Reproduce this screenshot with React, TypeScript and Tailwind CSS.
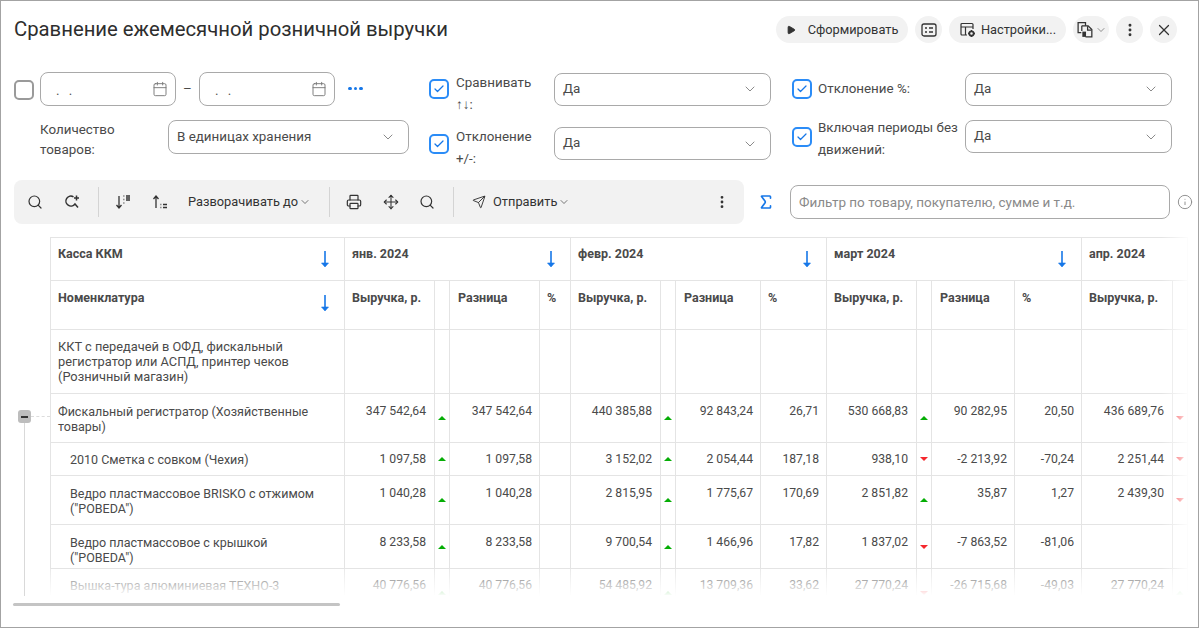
import { Calendar, Check, ChevronDown, Info, Move, MoreVertical, Play, Printer, Search, Send, Sigma, X } from "lucide-react";

const SortDownIcon = () => (
  <svg width="18" height="18" viewBox="0 0 18 18" fill="none" stroke="#333" strokeWidth="1.3">
    <path d="M5 3v12M2.500 12 5 15l2.500-3" />
    <path d="M9.500 3h.8M9.500 6.500h.8M9.500 10h.8M12 3h4M12 5h4M12 7h4" />
  </svg>
);

const SortUpIcon = () => (
  <svg width="18" height="18" viewBox="0 0 18 18" fill="none" stroke="#333" strokeWidth="1.3">
    <path d="M5 15V3M2.500 6 5 3l2.500 3" />
    <path d="M9.500 11.500h.8M9.500 14.500h.8M12 11.500h4M12 14.500h4" />
  </svg>
);

const SearchNextIcon = () => (
  <svg width="18" height="18" viewBox="0 0 18 18" fill="none" stroke="#333" strokeWidth="1.5">
    <path d="M10.500 3.800A5 5 0 1 0 12 11l3 3.600" />
    <path d="M13.500 2.500v5M11 5h5" />
  </svg>
);

const ReportListIcon = () => (
  <svg width="18" height="18" viewBox="0 0 18 18" fill="none" stroke="#333" strokeWidth="1.3">
    <rect x="2" y="3" width="14" height="12" rx="2" />
    <path d="M5 7h2M5 11h2M9 7h4M9 11h4" strokeWidth="1.6" />
  </svg>
);

const SettingsTableIcon = () => (
  <svg width="18" height="18" viewBox="0 0 18 18" fill="none" stroke="#333" strokeWidth="1.2">
    <path d="M8 14H3a1 1 0 0 1-1-1V3.500a1 1 0 0 1 1-1h10a1 1 0 0 1 1 1V8" />
    <path d="M2 6h12M6.500 6v8" />
    <circle cx="12.500" cy="12.500" r="2.200" strokeWidth="1.800" />
    <path d="M12.500 9v1M12.500 15v1M9 12.500h1M15 12.500h1" strokeWidth="1.400" />
  </svg>
);

const VariantsIcon = () => (
  <svg width="19" height="19" viewBox="0 0 18 18" fill="none" stroke="#333" strokeWidth="1.2">
    <path d="M5 12H2V2.500h7V5.500" />
    <path d="M5.500 5.500h6l3.500 3.500v7H9" />
    <path d="M5.500 5.500v5M11 6v3.500h3.500" />
    <rect x="6" y="11" width="3.500" height="5" fill="#333" stroke="none" />
  </svg>
);

const Pill = ({ className, children }: { className: string; children: React.ReactNode }) => (
  <div className={`h-[27px] rounded-full bg-[#f2f2f2] flex items-center justify-center shrink-0 text-[12.800px] text-[#333] ${className}`}>
    {children}
  </div>
);

const BlueCheck = () => (
  <div className="w-5 h-5 shrink-0 rounded-[5px] border-2 border-[#2b8cf7] flex items-center justify-center bg-white">
    <Check className="w-3 h-3 text-[#1677e8]" strokeWidth={2.5} />
  </div>
);

const SelectBox = ({ value, className }: { value: string; className: string }) => (
  <div className={`rounded-lg border border-[#a9a9a9] bg-white flex items-center justify-between pl-2 pr-3 text-[#4a4a4a] ${className}`}>
    <span>{value}</span>
    <ChevronDown className="w-4 h-4 text-[#777]" strokeWidth={1.3} />
  </div>
);

const DateBox = () => (
  <div className="w-[136px] h-[34px] rounded-lg border border-[#a9a9a9] flex items-center justify-between pl-[15px] pr-[7px] text-[#555]">
    <span className="tracking-[3px] pt-1">. .</span>
    <Calendar className="w-4 h-4 text-[#777]" strokeWidth={1.4} />
  </div>
);

const Divider = () => <div className="w-px h-[30px] bg-[#d4d4d4] shrink-0" />;

const ArrowDownBlue = () => (
  <svg width="12" height="20" viewBox="0 0 12 20" fill="none" className="ml-auto shrink-0" stroke="#1677e8" strokeWidth="1.6">
    <path d="M6 2v15" />
    <path d="M2.500 14 6 18l3.500-4z" fill="#1677e8" strokeWidth="0.6" />
  </svg>
);

type Dir = "up" | "down" | "";

const Tri = ({ dir }: { dir: Dir }) => {
  if (dir === "up") return <div className="mx-auto w-0 h-0 border-x-[4px] border-b-[4px] border-x-transparent border-b-[#05ad05]" />;
  if (dir === "down") return <div className="mx-auto w-0 h-0 border-x-[4px] border-t-[4px] border-x-transparent border-t-[#f5282d]" />;
  return null;
};

const months = [
  { name: "янв. 2024", span: 4, arrow: true },
  { name: "февр. 2024", span: 4, arrow: true },
  { name: "март 2024", span: 4, arrow: true },
  { name: "апр. 2024", span: 2, arrow: false },
];

const colWidths = [294, 90, 15, 90, 31, 90, 15, 85, 66, 90, 15, 83, 67, 91, 15];

const subHeaders = ["Выручка, р.", "", "Разница", "%", "Выручка, р.", "", "Разница", "%", "Выручка, р.", "", "Разница", "%", "Выручка, р.", ""];

const rows: { name: string; indent?: boolean; h: string; pad: string; cells: string[][]; dirs: Dir[] }[] = [
  {
    name: "Фискальный регистратор (Хозяйственные товары)",
    h: "h-[49px]",
    pad: "pt-[10px]",
    cells: [["347 542,64", "347 542,64", ""], ["440 385,88", "92 843,24", "26,71"], ["530 668,83", "90 282,95", "20,50"], ["436 689,76"]],
    dirs: ["up", "up", "up", "down"],
  },
  {
    name: "2010 Сметка с совком (Чехия)",
    indent: true,
    h: "h-[33px]",
    pad: "pt-[9px]",
    cells: [["1 097,58", "1 097,58", ""], ["3 152,02", "2 054,44", "187,18"], ["938,10", "-2 213,92", "-70,24"], ["2 251,44"]],
    dirs: ["up", "up", "down", "down"],
  },
  {
    name: 'Ведро пластмассовое BRISKO с отжимом ("POBEDA")',
    indent: true,
    h: "h-[49px]",
    pad: "pt-[10px]",
    cells: [["1 040,28", "1 040,28", ""], ["2 815,95", "1 775,67", "170,69"], ["2 851,82", "35,87", "1,27"], ["2 439,30"]],
    dirs: ["up", "up", "up", "down"],
  },
  {
    name: 'Ведро пластмассовое с крышкой ("POBEDA")',
    indent: true,
    h: "h-[44px]",
    pad: "pt-[10px]",
    cells: [["8 233,58", "8 233,58", ""], ["9 700,54", "1 466,96", "17,82"], ["1 837,02", "-7 863,52", "-81,06"], [""]],
    dirs: ["up", "up", "down", ""],
  },
  {
    name: "Вышка-тура алюминиевая ТЕХНО-3",
    indent: true,
    h: "h-[49px]",
    pad: "pt-[9px]",
    cells: [["40 776,56", "40 776,56", ""], ["54 485,92", "13 709,36", "33,62"], ["27 770,24", "-26 715,68", "-49,03"], ["27 770,24"]],
    dirs: ["up", "up", "down", "up"],
  },
];

const cellB = "border border-[#e4e4e4]";

const GroupCells = ({ group, dir, pad }: { group: string[]; dir: Dir; pad: string }) => (
  <>
    <td className={`${cellB} ${pad} align-top text-right text-[12.200px] pr-[8px]`}>{group[0]}</td>
    <td className={`${cellB} align-middle`}>
      <Tri dir={dir} />
    </td>
    {group.slice(1).map((v, i) => (
      <td key={i} className={`${cellB} ${pad} align-top text-right text-[12.200px] pr-[7px]`}>
        {v}
      </td>
    ))}
  </>
);

const App = () => {
  return (
    <div className="w-[1199px] h-[628px] border border-[#a3a3a3] bg-white overflow-hidden text-[13.400px] text-[#4a4a4a] font-['Roboto',sans-serif]">
      {/* Title */}
      <div className="flex items-center pl-[13px] pr-[21px] pt-[15px]">
        <h1 className="text-[20.300px] leading-[27px] text-[#2e2e2e] font-normal">Сравнение ежемесячной розничной выручки</h1>
        <div className="ml-auto flex items-center gap-[7px]">
          <Pill className="w-[132px] gap-[12px]">
            <Play className="w-[10px] h-[10px] fill-[#333] text-[#333]" />
            <span>Сформировать</span>
          </Pill>
          <Pill className="w-[27px]">
            <ReportListIcon />
          </Pill>
          <Pill className="w-[117px] gap-[4px]">
            <SettingsTableIcon />
            <span>Настройки...</span>
          </Pill>
          <Pill className="w-[36px]">
            <VariantsIcon />
            <ChevronDown className="w-3 h-3 text-[#555]" strokeWidth={1.3} />
          </Pill>
          <Pill className="w-[27px]">
            <MoreVertical className="w-4 h-4 text-[#333]" strokeWidth={2.4} />
          </Pill>
          <Pill className="w-[27px]">
            <X className="w-[18px] h-[18px] text-[#333]" strokeWidth={1.6} />
          </Pill>
        </div>
      </div>

      {/* Filters */}
      <div className="flex mt-[29px] pl-[13px] h-[96px]">
        <div className="w-[415px] shrink-0">
          <div className="flex items-center h-[34px]">
            <div className="w-5 h-5 rounded-[5px] border-2 border-[#9a9a9a] mr-[6px] mt-[2px]" />
            <DateBox />
            <span className="w-[23px] text-center">–</span>
            <DateBox />
            <span className="ml-[13px] -mt-[1px] flex gap-[2px]">
              <span className="w-[3.500px] h-[3.500px] rounded-full bg-[#1677e8]" />
              <span className="w-[3.500px] h-[3.500px] rounded-full bg-[#1677e8]" />
              <span className="w-[3.500px] h-[3.500px] rounded-full bg-[#1677e8]" />
            </span>
          </div>
          <div className="flex items-start mt-[14px] pl-[26px]">
            <div className="w-[128px] leading-[20px]">Количество товаров:</div>
            <SelectBox value="В единицах хранения" className="w-[241px] h-[34px]" />
          </div>
        </div>

        <div className="w-[363px] shrink-0 pt-[1px]">
          <div className="flex items-center h-[32px]">
            <BlueCheck />
            <div className="w-[98px] ml-[7px] mt-[10px] pr-[18px] leading-[22px]">
              Сравнивать <span>↑↓:</span>
            </div>
            <SelectBox value="Да" className="w-[217px] h-[33px]" />
          </div>
          <div className="flex items-center h-[33px] mt-[22px]">
            <BlueCheck />
            <div className="w-[98px] ml-[7px] mt-[9px] pr-[18px] leading-[22px]">Отклонение +/-:</div>
            <SelectBox value="Да" className="w-[217px] h-[33px]" />
          </div>
        </div>

        <div className="flex-1">
          <div className="flex items-center h-[34px]">
            <BlueCheck />
            <div className="w-[147px] ml-[6px] leading-[22px]">Отклонение %:</div>
            <SelectBox value="Да" className="w-[207px] h-[33px]" />
          </div>
          <div className="flex items-center h-[33px] mt-[14px]">
            <BlueCheck />
            <div className="w-[147px] ml-[6px] mt-[4px] leading-[22px]">Включая периоды без движений:</div>
            <SelectBox value="Да" className="w-[207px] h-[33px]" />
          </div>
        </div>
      </div>

      {/* Toolbar */}
      <div className="flex items-center mt-[12px] pl-[13px]">
        <div className="w-[730px] h-[44px] rounded-lg bg-[#f2f2f2] flex items-center text-[#333] text-[12.800px] shrink-0">
          <Search className="w-4 h-4 ml-[13px]" strokeWidth={1.8} />
          <div className="ml-[20px]">
            <SearchNextIcon />
          </div>
          <div className="ml-[17px]">
            <Divider />
          </div>
          <div className="ml-[15px]">
            <SortDownIcon />
          </div>
          <div className="ml-[19px]">
            <SortUpIcon />
          </div>
          <span className="ml-[19px]">Разворачивать до</span>
          <ChevronDown className="w-3 h-3 ml-[1px]" strokeWidth={1.3} />
          <div className="ml-[18px]">
            <Divider />
          </div>
          <Printer className="w-4 h-4 ml-[16px]" strokeWidth={1.8} />
          <Move className="w-4 h-4 ml-[21px]" strokeWidth={1.6} />
          <Search className="w-4 h-4 ml-[20px]" strokeWidth={1.8} />
          <div className="ml-[18px]">
            <Divider />
          </div>
          <Send className="w-[14px] h-[14px] ml-[18px]" strokeWidth={1.6} />
          <span className="ml-[7px]">Отправить</span>
          <ChevronDown className="w-3 h-3 ml-[1px]" strokeWidth={1.3} />
          <MoreVertical className="w-4 h-4 ml-auto mr-[14px]" strokeWidth={2.2} />
        </div>
        <Sigma className="w-[18px] h-[18px] ml-[13px] text-[#1677e8]" strokeWidth={2.2} />
        <div className="w-[380px] h-[34px] ml-[15px] rounded-lg border border-[#a9a9a9] flex items-center pl-[8px] text-[13.500px] text-[#8a8a8a]">
          Фильтр по товару, покупателю, сумме и т.д.
        </div>
        <Info className="w-4 h-4 ml-[7px] text-[#8a8a8a]" strokeWidth={1.4} />
      </div>

      {/* Report table */}
      <div className="flex mt-[13px] ml-[13px] w-[1177px]">
        <div className="w-[36px] shrink-0 pt-[173px] flex flex-col items-start pl-[4px] h-[359px]">
          <div className="flex items-center">
            <div className="w-[13px] h-[13px] rounded-[3px] bg-[#bdbdbd] flex items-center justify-center">
              <div className="w-[7px] h-[2px] bg-[#333]" />
            </div>
            <div className="w-[19px] border-t border-dashed border-[#dcdcdc]" />
          </div>
          <div className="w-px flex-1 ml-[6px] bg-[#d9d9d9]" />
        </div>

        <div className="relative h-[359px] flex-1 overflow-hidden">
          <table className="table-fixed border-collapse w-[1137px] text-[12.500px] leading-[15px]">
            <colgroup>
              {colWidths.map((w, i) => (
                <col key={i} style={{ width: w }} />
              ))}
            </colgroup>
            <thead className="font-bold text-[#4a4a4a]">
              <tr className="h-[43px]">
                <th className={`${cellB} align-top text-left font-bold pt-[8px] pl-[7px] pr-[13px]`}>
                  <div className="flex items-start">
                    <span>Касса ККМ</span>
                    <span className="mt-[3px] ml-auto">
                      <ArrowDownBlue />
                    </span>
                  </div>
                </th>
                {months.map((m) => (
                  <th key={m.name} colSpan={m.span} className={`${cellB} align-top text-left font-bold pt-[8px] pl-[7px] pr-[13px]`}>
                    <div className="flex items-start">
                      <span>{m.name}</span>
                      {m.arrow && (
                        <span className="mt-[3px] ml-auto">
                          <ArrowDownBlue />
                        </span>
                      )}
                    </div>
                  </th>
                ))}
              </tr>
              <tr className="h-[49px]">
                <th className={`${cellB} align-top text-left font-bold pt-[9px] pl-[7px] pr-[13px]`}>
                  <div className="flex items-start">
                    <span>Номенклатура</span>
                    <span className="mt-[3px] ml-auto">
                      <ArrowDownBlue />
                    </span>
                  </div>
                </th>
                {subHeaders.map((t, i) => (
                  <th key={i} className={`${cellB} align-top text-left font-bold pt-[9px] ${t === "Разница" ? "pl-[8px]" : "pl-[7px]"}`}>
                    {t}
                  </th>
                ))}
              </tr>
            </thead>
            <tbody>
              <tr className="h-[64px]">
                <td className={`${cellB} pl-[7px] pr-[20px] align-middle text-[12.800px]`}>ККТ с передачей в ОФД, фискальный регистратор или АСПД, принтер чеков (Розничный магазин)</td>
                {subHeaders.map((_, i) => (
                  <td key={i} className={cellB} />
                ))}
              </tr>
              {rows.map((r) => (
                <tr key={r.name} className={r.h}>
                  <td className={`${cellB} ${r.pad} align-top pr-[20px] ${r.indent ? "pl-[19px]" : "pl-[7px]"}`}>{r.name}</td>
                  {r.cells.map((group, i) => (
                    <GroupCells key={i} group={group} dir={r.dirs[i]} pad={r.pad} />
                  ))}
                </tr>
              ))}
            </tbody>
          </table>
          <div className="absolute inset-y-0 right-0 w-[30px] bg-gradient-to-r from-transparent to-white" />
          <div className="absolute inset-x-0 bottom-0 h-[27px] bg-gradient-to-b from-white/20 to-white" />
        </div>
      </div>

      {/* Horizontal scrollbar */}
      <div className="w-[327px] h-[3px] ml-[12px] mt-[7px] rounded-full bg-[#c4c4c4]" />
    </div>
  );
};

export default App;
